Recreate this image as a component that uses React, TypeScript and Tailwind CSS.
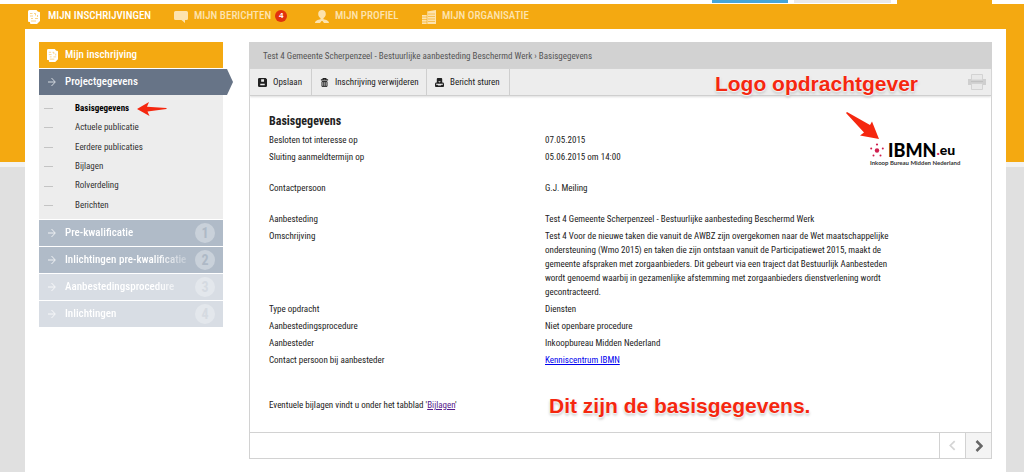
import type { ReactNode } from "react";
import clsx from "clsx";

type IconProps = { className?: string };

const NotesIcon = ({ className }: IconProps) => (
  <svg viewBox="0 0 12 14" className={className} fill="none">
    <path d="M1.500 0h7L10 1.800h1a1 1 0 0 1 1 1V11l-3 3H3a1 1 0 0 1-1-1v-1H1a1 1 0 0 1-1-1V1.500A1.500 1.500 0 0 1 1.500 0z" fill="currentColor" />
    <path d="M2 3.500h2.500M6 3.500h1.500v2M2 6h3M7 8.500h3M3 8.500h2M3 11h5M9.500 5v2" stroke="#f4a911" strokeOpacity=".5" />
  </svg>
);

const ChatIcon = ({ className }: IconProps) => (
  <svg viewBox="0 0 14 12" className={className} fill="currentColor">
    <path d="M1.500 0h11A1.500 1.500 0 0 1 14 1.500v6A1.500 1.500 0 0 1 12.500 9H11v3L7.500 9h-6A1.500 1.500 0 0 1 0 7.500v-6A1.500 1.500 0 0 1 1.500 0z" />
  </svg>
);

const PersonIcon = ({ className }: IconProps) => (
  <svg viewBox="0 0 14 14" className={className} fill="currentColor">
    <path d="M7 0c2.300 0 3.800 1.600 3.800 4C10.800 6 9.600 7.400 8.500 8v1.300c2.600.5 5.500 1.500 5.500 3.700H9L7.500 11h-1L5 13H0c0-2.200 2.900-3.200 5.500-3.700V8C4.400 7.400 3.200 6 3.200 4 3.200 1.600 4.700 0 7 0z" />
  </svg>
);

const BuildingIcon = ({ className }: IconProps) => (
  <svg viewBox="0 0 14 14" className={className}>
    <path d="M5 1.500 14 0v14H5zM0 5h5v9H0z" fill="currentColor" />
    <path d="M0 7h5M0 9.500h5M0 12h5M6 4h7M6 6.500h7M6 9h7M6 11.500h7M5 2v12" stroke="#f4a911" strokeOpacity=".6" />
  </svg>
);

const SaveIcon = ({ className }: IconProps) => (
  <svg viewBox="0 0 10 10" className={className} fillRule="evenodd" fill="currentColor">
    <path d="M1.500 0h7L10 1.500v7A1.500 1.500 0 0 1 8.500 10h-7A1.500 1.500 0 0 1 0 8.500v-7A1.500 1.500 0 0 1 1.500 0zM3.500 1.500v2.800h3.200V1.500zM2.500 6.500V8h5V6.500z" />
  </svg>
);

const TrashIcon = ({ className }: IconProps) => (
  <svg viewBox="0 0 10 10" className={className} fill="none" stroke="currentColor">
    <path d="M1 2h8M3.500 1.500v-1h3v1" strokeWidth="1.300" />
    <path d="M2.200 4v5.300h5.600V4zM4.200 4v5M5.800 4v5" strokeWidth="1.100" />
  </svg>
);

const SendIcon = ({ className }: IconProps) => (
  <svg viewBox="0 0 10 10" className={className} fillRule="evenodd" fill="currentColor">
    <path d="M3 0h4a1 1 0 0 1 1 1v4h1.200L10 6.500V9a1 1 0 0 1-1 1H1a1 1 0 0 1-1-1V6.500L.8 5H2V1a1 1 0 0 1 1-1zM3.500 3.500 5 5l1.500-1.500zM1.200 6.500v1h1.600l.7.900h3l.7-.900h1.600v-1z" />
  </svg>
);

const PrinterIcon = ({ className }: IconProps) => (
  <svg viewBox="0 0 18 16" className={className} fill="none">
    <path d="M0 5h18v6H0z" fill="#cfcfcf" />
    <path d="M3.500.5h11V6h-11zM3.500 9.500h11v6h-11z" fill="#e9e9e9" stroke="#d3d3d3" />
    <path d="M3 7.500h12" stroke="#c0c0c0" />
  </svg>
);

const ArrowRightIcon = ({ className }: IconProps) => (
  <svg viewBox="0 0 8 10" className={className} fill="none" stroke="currentColor">
    <path d="M0 5h7M3.500 1 7.300 5 3.500 9" />
  </svg>
);

const LogoMark = ({ className }: IconProps) => (
  <svg viewBox="0 0 14 14" className={className} fill="#cf1f4e">
    <circle cx="7" cy="7.500" r="2.200" />
    <circle cx="7" cy="1.500" r="1.100" />
    <circle cx="1.200" cy="5.500" r="1" />
    <circle cx="12.800" cy="5.500" r="1" />
    <circle cx="3.500" cy="12.500" r="1" />
    <circle cx="10.500" cy="12.500" r="1" />
  </svg>
);

const menu = [
  { label: "MIJN INSCHRIJVINGEN", icon: NotesIcon, width: "w-[146px]", size: "h-[14px] w-3", active: true },
  { label: "MIJN BERICHTEN", icon: ChatIcon, width: "w-[141px]", size: "h-3 w-[14px]", count: 4 },
  { label: "MIJN PROFIEL", icon: PersonIcon, width: "w-[107px]", size: "h-[14px] w-[14px]" },
  { label: "MIJN ORGANISATIE", icon: BuildingIcon, width: "w-[120px]", size: "h-[14px] w-[14px]" },
];

const subItems = ["Basisgegevens", "Actuele publicatie", "Eerdere publicaties", "Bijlagen", "Rolverdeling", "Berichten"];

const phases = [
  { label: "Pre-kwalificatie", enabled: true },
  { label: "Inlichtingen pre-kwalificatie", enabled: true },
  { label: "Aanbestedingsprocedure", enabled: false },
  { label: "Inlichtingen", enabled: false },
];

const actions = [
  { label: "Opslaan", icon: SaveIcon, width: "w-[62px]" },
  { label: "Inschrijving verwijderen", icon: TrashIcon, width: "w-[115px]" },
  { label: "Bericht sturen", icon: SendIcon, width: "w-[83px]" },
];

const Header = () => (
  <header>
    <div className="flex h-1 justify-end gap-[6px] bg-white pr-8">
      <span className="h-[3px] w-[76px] bg-[#45a5d9]" />
      <span className="h-[3px] w-[97px] bg-[#e9e9e9]" />
      <span className="w-[95px] bg-[#f4a911]" />
    </div>
    <nav className="flex h-[25px] items-center pl-7">
      {menu.map(({ label, icon: Icon, width, size, active, count }) => (
        <a
          key={label}
          href="#"
          className={clsx("flex shrink-0 items-center text-[11px] font-medium whitespace-nowrap", width, active ? "text-white" : "text-[#fde3ae]")}
        >
          <span className="w-5 shrink-0">
            <Icon className={size} />
          </span>
          {label}
          {count && (
            <span className="mb-[2px] ml-1 flex h-3 w-3 shrink-0 items-center justify-center rounded-full bg-[#e2330d] font-['Liberation_Sans'] text-[8px] font-bold text-white">
              {count}
            </span>
          )}
        </a>
      ))}
    </nav>
  </header>
);

const Sidebar = () => (
  <aside className="w-[194px] shrink-0 text-[11px] font-medium text-white">
    <a href="#" className="flex h-[26px] w-[184px] items-center bg-[#f4a911] pl-2">
      <span className="w-[18px]">
        <NotesIcon className="h-[13px] w-[11px]" />
      </span>
      Mijn inschrijving
    </a>
    <a
      href="#"
      className="mt-px flex h-[26px] items-center bg-[#677487] pl-[9px] [clip-path:polygon(0_0,188px_0,100%_50%,188px_100%,0_100%)]"
    >
      <span className="w-[17px]">
        <ArrowRightIcon className="h-[10px] w-2 text-[#d5dae0]" />
      </span>
      Projectgegevens
    </a>
    <ul className="flex h-[124px] w-[184px] flex-col justify-between bg-[#ededed] pt-1 pb-1">
      {subItems.map((item, i) => (
        <li key={item} className="flex h-[19px] items-center pl-[5px] text-[9px] font-normal text-[#333]">
          <span className="mr-[22px] h-px w-[9px] bg-[#c4c4c4]" />
          <a href="#" className={clsx(i === 0 && "font-bold text-black")}>
            {item}
          </a>
        </li>
      ))}
    </ul>
    <div className="mt-px flex w-[184px] flex-col gap-px">
      {phases.map(({ label, enabled }, i) => (
        <a key={label} href="#" className={clsx("flex h-[26px] items-center pr-2 pl-[9px]", enabled ? "bg-[#b0bbc8]" : "bg-[#d8dde4]")}>
          <span className="w-[17px] shrink-0">
            <ArrowRightIcon className="h-[10px] w-2 opacity-80" />
          </span>
          <span className="whitespace-nowrap [mask-image:linear-gradient(to_right,#000_90px,rgb(0_0_0_/_0.2)_124px)]">
            {label}
          </span>
          <span
            className={clsx(
              "ml-auto flex h-5 w-5 shrink-0 items-center justify-center rounded-full text-[14px] font-bold",
              enabled ? "bg-[#c9d1da] text-[#aeb9c6]" : "bg-[#e3e7ec] text-[#d5dae1]"
            )}
          >
            {i + 1}
          </span>
        </a>
      ))}
    </div>
  </aside>
);

const Row = ({ label, children, spaced }: { label: string; children: ReactNode; spaced?: boolean }) => (
  <div className={clsx("flex pb-[3px]", spaced && "mb-[14px]")}>
    <dt className="w-[276px] shrink-0">{label}</dt>
    <dd className="w-[348px]">{children}</dd>
  </div>
);

const Logo = () => (
  <div className="flex w-[88px] flex-col font-['Lato'] text-black">
    <div className="flex h-[18px] items-center">
      <LogoMark className="mr-1 h-[14px] w-[14px] shrink-0" />
      <span className="text-[18px] leading-[18px] font-black">IBMN</span>
      <span className="text-[14px] leading-[18px] font-black">
        <span className="text-[#cf1f4e]">.</span>eu
      </span>
    </div>
    <span className="text-[6px] leading-[8px] font-bold whitespace-nowrap text-[#333]">Inkoop Bureau Midden Nederland</span>
  </div>
);

const noteText =
  "font-['Liberation_Sans'] text-[21px] leading-6 font-bold whitespace-nowrap text-[#f5270f] [text-shadow:0_0_2px_#fff,0_1px_2px_#fff,0_2px_3px_#aaa]";

const Details = () => (
  <main className="relative min-w-0 flex-1 border border-[#d2d2d2] text-[9px] leading-[14px] text-[#222]">
    <div className="flex h-[26px] items-center bg-[#d2d2d2] pl-[13px] text-[#555]">
      Test 4 Gemeente Scherpenzeel - Bestuurlijke aanbesteding Beschermd Werk › Basisgegevens
    </div>
    <div className="flex h-[27px] items-center border-b border-[#cfcfcf] bg-[#ededed] pr-[5px] shadow-[0_1px_2px_#ddd]">
      {actions.map(({ label, icon: Icon, width }) => (
        <button key={label} className={clsx("flex h-full shrink-0 items-center border-r border-[#cfcfcf] pl-2 whitespace-nowrap", width)}>
          <Icon className="mr-[6px] h-[9px] w-[9px] shrink-0" />
          {label}
        </button>
      ))}
      <button aria-label="Afdrukken" className="ml-auto">
        <PrinterIcon className="h-4 w-[18px]" />
      </button>
    </div>
    <section className="min-h-[336px] pt-[17px] pl-[19px]">
      <h1 className="mb-1 text-[12px] leading-4 font-bold">Basisgegevens</h1>
      <dl>
        <Row label="Besloten tot interesse op">07.05.2015</Row>
        <Row label="Sluiting aanmeldtermijn op" spaced>
          05.06.2015 om 14:00
        </Row>
        <Row label="Contactpersoon" spaced>
          G.J. Meiling
        </Row>
        <Row label="Aanbesteding">Test 4 Gemeente Scherpenzeel - Bestuurlijke aanbesteding Beschermd Werk</Row>
        <Row label="Omschrijving">
          Test 4 Voor de nieuwe taken die vanuit de AWBZ zijn overgekomen naar de Wet maatschappelijke ondersteuning (Wmo 2015) en
          taken die zijn ontstaan vanuit de Participatiewet 2015, maakt de gemeente afspraken met zorgaanbieders. Dit gebeurt via een
          traject dat Bestuurlijk Aanbesteden wordt genoemd waarbij in gezamenlijke afstemming met zorgaanbieders dienstverlening
          wordt gecontracteerd.
        </Row>
        <Row label="Type opdracht">Diensten</Row>
        <Row label="Aanbestedingsprocedure">Niet openbare procedure</Row>
        <Row label="Aanbesteder">Inkoopbureau Midden Nederland</Row>
        <Row label="Contact persoon bij aanbesteder">
          <a href="#" className="text-[#0000ee] underline">
            Kenniscentrum IBMN
          </a>
        </Row>
      </dl>
      <p className="mt-7">
        Eventuele bijlagen vindt u onder het tabblad '
        <a href="#" className="text-[#551a8b] underline">
          Bijlagen
        </a>
        '
      </p>
    </section>
    <footer className="flex h-[26px] justify-end border-t border-[#d2d2d2]">
      <button aria-label="Vorige" disabled className="flex w-[26px] items-center justify-center border-l border-[#d2d2d2] text-[#d5d5d5]">
        <svg viewBox="0 0 8 12" className="h-[11px] w-[7px]" fill="none" stroke="currentColor" strokeWidth="2">
          <path d="M6.500 1 1.500 6l5 5" />
        </svg>
      </button>
      <button aria-label="Volgende" className="flex w-[26px] items-center justify-center border-l border-[#d2d2d2] bg-[#f4f4f4] text-[#666]">
        <svg viewBox="0 0 8 12" className="h-[12px] w-2" fill="none" stroke="currentColor" strokeWidth="2.500">
          <path d="m1.500 1 5 5-5 5" />
        </svg>
      </button>
    </footer>
    <div className="absolute top-[98px] right-[33px]">
      <Logo />
    </div>
  </main>
);

// red notes and arrows drawn over the page
const Annotations = () => (
  <div className="pointer-events-none">
    <span className={clsx("absolute top-[72px] right-[106px]", noteText)}>Logo opdrachtgever</span>
    <span className={clsx("absolute top-[394px] left-[549px]", noteText)}>Dit zijn de basisgegevens.</span>
    <svg viewBox="0 0 30 14" className="absolute top-[102px] left-[137px] h-[14px] w-[30px]" fill="#f5270f">
      <path d="M0 7 12 0 10 4.800 29.500 6v1L10.500 9.500 12.500 14z" />
    </svg>
    <svg viewBox="0 0 33 28" className="absolute top-[112px] right-[145px] h-7 w-[33px]" fill="#f5270f">
      <path d="M1 0 24 13 26 9.500 33 27 14 23.500 18 20.500 0 1z" />
    </svg>
  </div>
);

export default function App() {
  return (
    <div className="relative min-h-screen bg-[linear-gradient(#f4a911_0_162px,#f2f2f2_162px_167px,#e0e0e0_167px)] font-['Roboto_Condensed','Liberation_Sans',sans-serif]">
      <Header />
      <div className="mr-[18px] ml-[25px] flex min-h-[443px] gap-4 bg-white px-[14px] pt-[13px] pb-[13px]">
        <Sidebar />
        <Details />
      </div>
      <Annotations />
    </div>
  );
}
